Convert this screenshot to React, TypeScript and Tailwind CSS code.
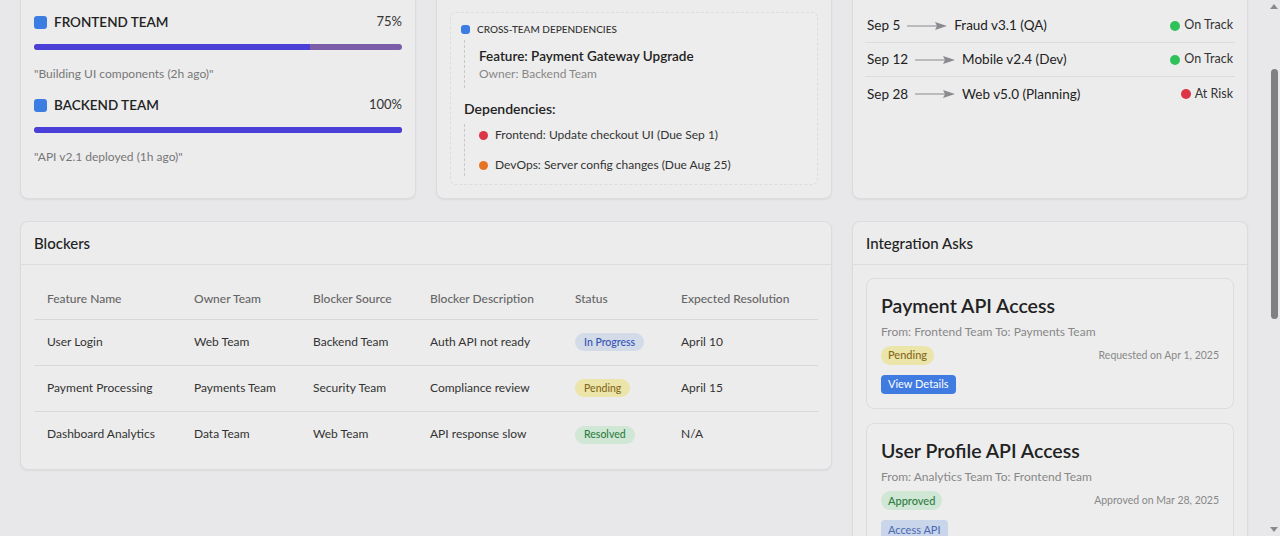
import React from 'react';

const font = { fontFamily: 'Lato, "Noto Sans", sans-serif' };

interface Team {
  name: string;
  pct: number;
  note: string;
}

const teams: Team[] = [
  { name: 'Frontend Team', pct: 75, note: '"Building UI components (2h ago)"' },
  { name: 'Backend Team', pct: 100, note: '"API v2.1 deployed (1h ago)"' },
];

const releases = [
  { date: 'Sep 5', name: 'Fraud v3.1 (QA)', status: 'On Track', dot: 'bg-[#2fc25b]' },
  { date: 'Sep 12', name: 'Mobile v2.4 (Dev)', status: 'On Track', dot: 'bg-[#2fc25b]' },
  { date: 'Sep 28', name: 'Web v5.0 (Planning)', status: 'At Risk', dot: 'bg-[#dc3545]' },
];

const blockers = [
  {
    feature: 'User Login',
    owner: 'Web Team',
    source: 'Backend Team',
    desc: 'Auth API not ready',
    status: 'In Progress',
    badge: 'bg-[#d3dbe9] text-[#3454b4]',
    eta: 'April 10',
  },
  {
    feature: 'Payment Processing',
    owner: 'Payments Team',
    source: 'Security Team',
    desc: 'Compliance review',
    status: 'Pending',
    badge: 'bg-[#ebe5a9] text-[#86691c]',
    eta: 'April 15',
  },
  {
    feature: 'Dashboard Analytics',
    owner: 'Data Team',
    source: 'Web Team',
    desc: 'API response slow',
    status: 'Resolved',
    badge: 'bg-[#cfe7d4] text-[#2f7d45]',
    eta: 'N/A',
  },
];

const asks = [
  {
    title: 'Payment API Access',
    route: 'From: Frontend Team To: Payments Team',
    status: 'Pending',
    badge: 'bg-[#ebe5a9] text-[#86691c]',
    date: 'Requested on Apr 1, 2025',
    action: 'View Details',
    button: 'bg-[#3f7be0] text-white',
  },
  {
    title: 'User Profile API Access',
    route: 'From: Analytics Team To: Frontend Team',
    status: 'Approved',
    badge: 'bg-[#cfe7d4] text-[#2f7d45]',
    date: 'Approved on Mar 28, 2025',
    action: 'Access API',
    button: 'bg-[#c8d5ea] text-[#4a69b0]',
  },
];

function Arrow() {
  return (
    <svg width="40" height="10" viewBox="0 0 40 10" className="shrink-0">
      <line x1="0" y1="5" x2="30" y2="5" stroke="#8a8a8e" strokeWidth="1" />
      <path d="M28 1 L40 5 L28 9 L30 5 Z" fill="#8a8a8e" />
    </svg>
  );
}

export default function App() {
  return (
    <div className="flex h-[536px] w-full overflow-hidden bg-[#e8e8ea] text-[#222]" style={font}>
      <div className="flex-1 px-5">
        <div className="grid grid-cols-3 gap-x-5 gap-y-[22px]">
          {/* Team progress */}
          <div className="h-[199px] rounded-b-lg border-x border-b border-[#dcdcde] bg-[#ececec] px-[13px] pt-3 shadow-[0_1px_2px_rgba(0,0,0,0.06)]">
            {teams.map((t, i) => (
              <div key={t.name} className={i > 0 ? 'mt-[13px]' : ''}>
                <div className="flex h-5 items-center justify-between">
                  <div className="flex items-center gap-[7px]">
                    <span className="h-[13px] w-[13px] rounded-[3px] bg-[#3b7de0]" />
                    <span className="text-[13.5px] font-semibold uppercase">{t.name}</span>
                  </div>
                  <span className="text-[13px] text-[#333]">{t.pct}%</span>
                </div>
                <div className="mt-[12px] h-1.5 w-full overflow-hidden rounded-full bg-[#7b5ea7]">
                  <div className="h-full rounded-l-full bg-[#4a3fd6]" style={{ width: `${t.pct}%` }} />
                </div>
                <p className="mt-4 text-[12px] leading-4 text-[#777]">{t.note}</p>
              </div>
            ))}
          </div>

          {/* Cross-team dependencies */}
          <div className="h-[199px] rounded-b-lg border-x border-b border-[#dcdcde] bg-[#ececec] px-[13px] pt-3 shadow-[0_1px_2px_rgba(0,0,0,0.06)]">
            <div className="h-[173px] rounded-md border border-dashed border-[#dddde0] bg-[#ededed] px-[10px] pt-[10px]">
              <div className="flex h-3 items-center gap-[7px]">
                <span className="h-[9px] w-[9px] rounded-[3px] bg-[#3b7de0]" />
                <span className="text-[10px] font-medium uppercase text-[#333]">Cross-Team Dependencies</span>
              </div>
              <div className="ml-[3px] mt-[5px] border-l border-dashed border-[#c8c8cc] pb-[6px] pl-[14px] pt-[6px]">
                <p className="text-[13.5px] font-semibold leading-5">Feature: Payment Gateway Upgrade</p>
                <p className="text-[12px] leading-4 text-[#888]">Owner: Backend Team</p>
              </div>
              <p className="ml-[3px] mt-[11px] text-[14px] font-semibold leading-5">Dependencies:</p>
              <div className="ml-[3px] mt-[5px] flex flex-col gap-[14px] border-l border-dashed border-[#c8c8cc] py-[3px] pl-[14px]">
                <div className="flex h-4 items-center gap-[7px]">
                  <span className="h-[9px] w-[9px] rounded-full bg-[#dc3545]" />
                  <span className="text-[12px] text-[#333]">Frontend: Update checkout UI (Due Sep 1)</span>
                </div>
                <div className="flex h-4 items-center gap-[7px]">
                  <span className="h-[9px] w-[9px] rounded-full bg-[#e67324]" />
                  <span className="text-[12px] text-[#333]">DevOps: Server config changes (Due Aug 25)</span>
                </div>
              </div>
            </div>
          </div>

          {/* Release timeline */}
          <div className="h-[199px] rounded-b-lg border-x border-b border-[#dcdcde] bg-[#ececec] px-3 pt-[9px] shadow-[0_1px_2px_rgba(0,0,0,0.06)]">
            {releases.map((r, i) => (
              <div
                key={r.date}
                className={`flex h-[34px] items-center justify-between px-[2px] ${
                  i < releases.length - 1 ? 'border-b border-[#dcdcde]' : ''
                }`}
              >
                <div className="flex items-center gap-[7px] text-[13.5px]">
                  <span>{r.date}</span>
                  <Arrow />
                  <span>{r.name}</span>
                </div>
                <div className="flex items-center gap-[4px] text-[12.5px] text-[#333]">
                  <span className={`h-[10px] w-[10px] rounded-full ${r.dot}`} />
                  <span>{r.status}</span>
                </div>
              </div>
            ))}
          </div>

          {/* Blockers */}
          <div className="col-span-2 self-start rounded-lg border border-[#dcdcde] bg-[#ececec] shadow-[0_1px_2px_rgba(0,0,0,0.06)]">
            <div className="flex h-[43px] items-center border-b border-[#dcdcde] px-[13px]">
              <h2 className="text-[15px] font-medium">Blockers</h2>
            </div>
            <div className="px-[13px] pb-[12px] pt-[14px]">
              <table className="w-full border-collapse text-left text-[12px]">
                <thead>
                  <tr className="h-[40px] border-b border-[#d8d8da] text-[#666]">
                    <th className="w-[147px] pl-[13px] font-medium">Feature Name</th>
                    <th className="w-[119px] pl-[13px] font-medium">Owner Team</th>
                    <th className="w-[117px] pl-[13px] font-medium">Blocker Source</th>
                    <th className="w-[145px] pl-[13px] font-medium">Blocker Description</th>
                    <th className="w-[106px] pl-[13px] font-medium">Status</th>
                    <th className="pl-[13px] font-medium">Expected Resolution</th>
                  </tr>
                </thead>
                <tbody className="text-[#333]">
                  {blockers.map((b, i) => (
                    <tr
                      key={b.feature}
                      className={`h-[46px] ${i < blockers.length - 1 ? 'border-b border-[#d8d8da]' : ''}`}
                    >
                      <td className="pl-[13px]">{b.feature}</td>
                      <td className="pl-[13px]">{b.owner}</td>
                      <td className="pl-[13px]">{b.source}</td>
                      <td className="pl-[13px]">{b.desc}</td>
                      <td className="pl-[13px]">
                        <span className={`inline-flex h-[18px] items-center rounded-full px-[9px] text-[10.5px] font-medium ${b.badge}`}>
                          {b.status}
                        </span>
                      </td>
                      <td className="pl-[13px]">{b.eta}</td>
                    </tr>
                  ))}
                </tbody>
              </table>
            </div>
          </div>

          {/* Integration asks */}
          <div className="rounded-t-lg border-x border-t border-[#dcdcde] bg-[#ececec] shadow-[0_1px_2px_rgba(0,0,0,0.06)]">
            <div className="flex h-[43px] items-center border-b border-[#dcdcde] px-[13px]">
              <h2 className="text-[15px] font-medium">Integration Asks</h2>
            </div>
            <div className="flex flex-col gap-[14px] px-[13px] pt-[13px]">
              {asks.map((a) => (
                <div key={a.title} className="rounded-lg border border-[#dcdcde] bg-[#ededed] px-[14px] pb-[14px] pt-[13px]">
                  <h3 className="text-[19.5px] font-semibold leading-7">{a.title}</h3>
                  <p className="mt-[4px] text-[12px] leading-4 text-[#888]">{a.route}</p>
                  <div className="mt-[6px] flex items-center justify-between">
                    <span className={`inline-flex h-[19px] items-center rounded-full px-[7px] text-[11px] font-medium ${a.badge}`}>
                      {a.status}
                    </span>
                    <span className="text-[10.5px] text-[#888]">{a.date}</span>
                  </div>
                  <button className={`mt-[10px] h-[19px] rounded-[4px] px-[7px] text-[11px] ${a.button}`}>
                    {a.action}
                  </button>
                </div>
              ))}
            </div>
          </div>
        </div>
      </div>

      {/* Scrollbar */}
      <div className="flex w-3 flex-col items-center bg-[#e8e8ea] py-1">
        <svg width="8" height="5" viewBox="0 0 8 5">
          <path d="M0 5 L4 0 L8 5 Z" fill="#8a8a8a" />
        </svg>
        <div className="mt-[60px] h-[250px] w-[7px] rounded-full bg-[#808080]" />
        <div className="flex-1" />
        <svg width="8" height="5" viewBox="0 0 8 5">
          <path d="M0 0 L4 5 L8 0 Z" fill="#8a8a8a" />
        </svg>
      </div>
    </div>
  );
}
